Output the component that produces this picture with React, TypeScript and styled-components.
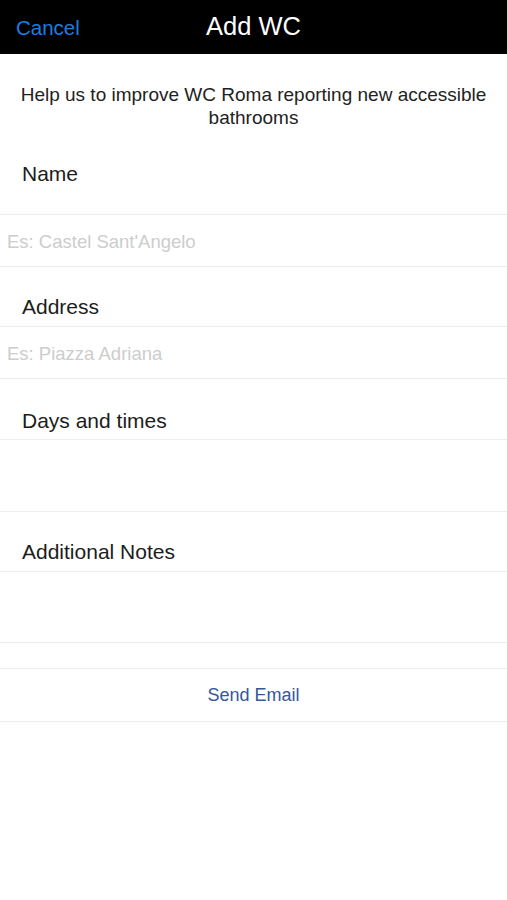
import React from 'react';
import styled, { createGlobalStyle } from 'styled-components';

const GlobalStyle = createGlobalStyle`
  html, body {
    margin: 0;
    padding: 0;
    background: #ffffff;
  }
  body {
    font-family: "Liberation Sans", Arial, sans-serif;
  }
`;

export default function App() {
  return (
    <>
      <GlobalStyle />
      <Screen>
        <NavBar>
          <CancelButton>Cancel</CancelButton>
          <Title>Add WC</Title>
        </NavBar>
        <Intro>Help us to improve WC Roma reporting new accessible bathrooms</Intro>

        <FieldLabel $height={80}>Name</FieldLabel>
        <InputCell $height={53}>
          <Placeholder>Es: Castel Sant'Angelo</Placeholder>
        </InputCell>

        <FieldLabel $height={59}>Address</FieldLabel>
        <InputCell $height={53}>
          <Placeholder>Es: Piazza Adriana</Placeholder>
        </InputCell>

        <FieldLabel $height={60} $top={30}>Days and times</FieldLabel>
        <InputCell $height={73} />

        <FieldLabel $height={59}>Additional Notes</FieldLabel>
        <InputCell $height={72} />

        <Spacer />
        <SendButton>Send Email</SendButton>
      </Screen>
    </>
  );
}

const Screen = styled.main`
  width: 507px;
  min-height: 900px;
  display: flex;
  flex-direction: column;
  background: #ffffff;
`;

const NavBar = styled.header`
  position: relative;
  height: 54px;
  background: #000000;
  display: flex;
  align-items: center;
  justify-content: center;
  padding-bottom: 2px;
  box-sizing: border-box;
`;

const CancelButton = styled.span`
  position: absolute;
  left: 16px;
  top: 16px;
  font-size: 20.5px;
  color: #1b7ee2;
`;

const Title = styled.h1`
  margin: 0;
  font-size: 25.5px;
  font-weight: normal;
  color: #ffffff;
`;

const Intro = styled.p`
  margin: 0;
  height: 80px;
  box-sizing: border-box;
  padding: 29px 18px 0;
  text-align: center;
  font-size: 19px;
  line-height: 23px;
  color: #222222;
`;

const FieldLabel = styled.div<{ $height: number; $top?: number }>`
  height: ${(p) => p.$height}px;
  box-sizing: border-box;
  padding: ${(p) => p.$top ?? 28}px 22px 0;
  font-size: 21px;
  line-height: 24px;
  color: #1c1c1c;
`;

const InputCell = styled.div<{ $height: number }>`
  height: ${(p) => p.$height}px;
  box-sizing: border-box;
  border-top: 1.5px solid #ececec;
  border-bottom: 1.5px solid #ececec;
  display: flex;
  align-items: center;
  padding: 3px 7px 0;
`;

const Placeholder = styled.span`
  font-size: 18.5px;
  color: #cdcdcd;
`;

const Spacer = styled.div`
  height: 25px;
`;

const SendButton = styled.div`
  height: 54px;
  box-sizing: border-box;
  border-top: 1.5px solid #ececec;
  border-bottom: 1.5px solid #ececec;
  display: flex;
  align-items: center;
  justify-content: center;
  font-size: 18px;
  color: #33589a;
`;
